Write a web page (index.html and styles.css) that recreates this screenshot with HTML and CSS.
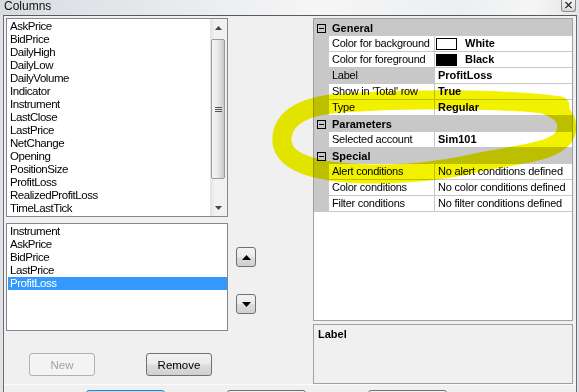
FILE: index.html
```html
<!DOCTYPE html>
<html>
<head>
<meta charset="utf-8">
<link rel="stylesheet" href="styles.css">
</head>
<body>
<div class="titlebar">
  <span class="title">Columns</span>
  <span class="close"><svg width="9" height="8" viewBox="0 0 9 8"><path d="M1.5 1 L7.5 7 M7.5 1 L1.5 7" stroke="#fff" stroke-width="3.2"/><path d="M1.5 1 L7.5 7 M7.5 1 L1.5 7" stroke="#333" stroke-width="1.6"/></svg></span>
</div>
<div class="frame">
  <div class="client">
    <div class="left">
      <div class="list list-all">
        <div class="items">
          <div class="item">AskPrice</div>
          <div class="item">BidPrice</div>
          <div class="item">DailyHigh</div>
          <div class="item">DailyLow</div>
          <div class="item">DailyVolume</div>
          <div class="item">Indicator</div>
          <div class="item">Instrument</div>
          <div class="item">LastClose</div>
          <div class="item">LastPrice</div>
          <div class="item">NetChange</div>
          <div class="item">Opening</div>
          <div class="item">PositionSize</div>
          <div class="item">ProfitLoss</div>
          <div class="item">RealizedProfitLoss</div>
          <div class="item">TimeLastTick</div>
        </div>
        <div class="vscroll">
          <div class="sbtn"><svg width="7" height="4" viewBox="0 0 7 4"><path d="M0 4 L3.5 0 L7 4 Z" fill="#444"/></svg></div>
          <div class="thumb"><div class="grip"><i></i><i></i><i></i></div></div>
          <div class="track"></div>
          <div class="sbtn"><svg width="7" height="4" viewBox="0 0 7 4"><path d="M0 0 L7 0 L3.5 4 Z" fill="#444"/></svg></div>
        </div>
      </div>
      <div class="list list-sel">
        <div class="item">Instrument</div>
        <div class="item">AskPrice</div>
        <div class="item">BidPrice</div>
        <div class="item">LastPrice</div>
        <div class="item selected">ProfitLoss</div>
      </div>
      <div class="btnrow">
        <div class="btn disabled">New</div>
        <div class="btn">Remove</div>
      </div>
    </div>
    <div class="middle">
      <div class="arrow"><svg width="9" height="5" viewBox="0 0 9 5"><path d="M0 5 L4.5 0 L9 5 Z" fill="#000"/></svg></div>
      <div class="arrow"><svg width="9" height="5" viewBox="0 0 9 5"><path d="M0 0 L9 0 L4.5 5 Z" fill="#000"/></svg></div>
    </div>
    <div class="right">
      <div class="pgrid">
        <div class="cat first"><span class="toggle"></span><span class="cat-label">General</span></div>
        <div class="row"><span class="gut"></span><span class="name">Color for background</span><span class="val"><span class="swatch"></span><b>White</b></span></div>
        <div class="row"><span class="gut"></span><span class="name">Color for foreground</span><span class="val"><span class="swatch black"></span><b>Black</b></span></div>
        <div class="row sel"><span class="gut"></span><span class="name">Label</span><span class="val"><b>ProfitLoss</b></span></div>
        <div class="row"><span class="gut"></span><span class="name">Show in 'Total' row</span><span class="val"><b>True</b></span></div>
        <div class="row"><span class="gut"></span><span class="name">Type</span><span class="val"><b>Regular</b></span></div>
        <div class="cat"><span class="toggle"></span><span class="cat-label">Parameters</span></div>
        <div class="row"><span class="gut"></span><span class="name">Selected account</span><span class="val"><b>Sim101</b></span></div>
        <div class="cat"><span class="toggle"></span><span class="cat-label">Special</span></div>
        <div class="row"><span class="gut"></span><span class="name">Alert conditions</span><span class="val">No alert conditions defined</span></div>
        <div class="row"><span class="gut"></span><span class="name">Color conditions</span><span class="val">No color conditions defined</span></div>
        <div class="row"><span class="gut"></span><span class="name">Filter conditions</span><span class="val">No filter conditions defined</span></div>
      </div>
      <div class="desc">Label</div>
    </div>
  </div>
  <div class="footer">
    <div class="fbtn default"></div>
    <div class="fbtn"></div>
    <div class="fbtn"></div>
  </div>
</div>
<svg class="mark" width="579" height="392" viewBox="0 0 579 392">
  <path d="M560 106 C520 100 430 97 340 103 C305 106 285 116 282 136 C280 156 298 166 330 171 C380 178 440 172 480 162 C520 154 552 152 563 138 C571 126 566 112 548 106" fill="none" stroke="#f2f200" stroke-width="19" stroke-linecap="round" stroke-linejoin="round"/>
</svg>
</body>
</html>
```

FILE: styles.css
```css
* { box-sizing: border-box; }
html, body { margin: 0; padding: 0; }
body {
  width: 579px;
  height: 392px;
  overflow: hidden;
  position: relative;
  background: #dfe3e8;
  font-family: "Liberation Sans", Arial, sans-serif;
  font-size: 11px;
  color: #000;
}
.titlebar {
  height: 15px;
  display: flex;
  align-items: flex-start;
  justify-content: space-between;
  padding: 0 3px 0 4px;
  background: linear-gradient(to right, #d8dce1 0%, #e8eaed 30%, #f6f6f6 55%, #eceef0 80%, #f6f6f6 92%, #e2e4e7 100%);
}
.title {
  font-size: 12px;
  line-height: 12px;
  margin-top: 0;
  color: #111;
}
.close {
  width: 15px;
  height: 13px;
  margin-top: -1px;
  border: 1px solid #8c8c8c;
  border-top: none;
  border-radius: 0 0 3px 3px;
  background: linear-gradient(#f4f4f4, #d6d6d6);
  display: flex;
  align-items: center;
  justify-content: center;
}
.frame {
  margin-left: 3px;
  width: 574px;
  border-left: 1px solid #6d6d6d;
  border-right: 1px solid #6d6d6d;
  border-top: 1px solid #5a5a5a;
  background: #f0f0f0;
}
.client {
  height: 368px;
  display: grid;
  grid-template-columns: 222px 85px 260px;
  padding: 2px 3px 0 2px;
}
.left { display: flex; flex-direction: column; }
.list {
  border: 1px solid #828790;
  background: #fff;
}
.list-all { height: 199px; display: flex; }
.items { flex: 1; padding-top: 1px; }
.item {
  height: 13px;
  line-height: 13px;
  margin-left: 1px;
  padding-left: 2px;
  white-space: nowrap;
  font-size: 11.5px;
  letter-spacing: -0.45px;
}
.item.selected { background: #3399ff; color: #fff; }
.vscroll {
  width: 17px;
  display: flex;
  flex-direction: column;
  background: linear-gradient(to right, #e3e3e3, #f2f2f2 30%, #f0f0f0);
}
.sbtn { height: 17px; display: flex; align-items: center; justify-content: center; }
.thumb {
  height: 140px;
  margin: 3px 2px 0 1px;
  border: 1px solid #9a9a9a;
  border-radius: 2px;
  background: linear-gradient(to right, #f6f6f6, #e9e9e9 45%, #d6d6d6 80%, #c6c6c6);
  display: flex;
  align-items: center;
  justify-content: center;
}
.grip { display: flex; flex-direction: column; gap: 1px; }
.grip i { display: block; width: 7px; height: 1px; background: #555; }
.track { flex: 1; }
.list-sel { height: 108px; margin-top: 6px; padding-top: 1px; }
.btnrow { display: flex; gap: 51px; margin-top: 22px; padding-left: 23px; }
.btn {
  width: 66px;
  height: 23px;
  border: 1px solid #707070;
  border-radius: 3px;
  background: linear-gradient(#f2f2f2 0%, #ebebeb 48%, #dddddd 52%, #cfcfcf 100%);
  display: flex;
  align-items: center;
  justify-content: center;
  font-size: 11.5px;
}
.btn.disabled {
  border-color: #adb2b5;
  background: #f4f4f4;
  color: #a0a0a0;
}
.middle {
  display: flex;
  flex-direction: column;
  align-items: flex-start;
  gap: 27px;
  padding: 229px 0 0 8px;
}
.arrow {
  width: 20px;
  height: 20px;
  border: 1px solid #707070;
  border-radius: 3px;
  background: linear-gradient(#f2f2f2 0%, #ebebeb 48%, #dddddd 52%, #cfcfcf 100%);
  display: flex;
  align-items: center;
  justify-content: center;
}
.right { display: flex; flex-direction: column; gap: 3px; }
.pgrid {
  height: 303px;
  border: 1px solid #a0a0a0;
  background: #fff;
}
.cat {
  height: 16px;
  background: #c8c8c8;
  display: flex;
  align-items: center;
}
.cat.first { height: 17px; padding-top: 1px; }
.toggle {
  width: 9px;
  height: 9px;
  margin-left: 3px;
  border: 1px solid #000;
  display: flex;
  align-items: center;
  justify-content: center;
}
.toggle::after { content: ""; width: 5px; height: 1px; background: #000; }
.cat-label { margin-left: 6px; font-weight: bold; line-height: 15px; }
.row {
  display: grid;
  grid-template-columns: 15px 106px 1fr;
  height: 16px;
  border-bottom: 1px solid #c8c8c8;
}
.gut { background: #c8c8c8; }
.name {
  border-right: 1px solid #c8c8c8;
  padding-left: 3px;
  line-height: 15px;
  white-space: nowrap;
  overflow: hidden;
  letter-spacing: -0.25px;
}
.row.sel .name { background: #c8c8c8; }
.val {
  padding-left: 3px;
  line-height: 15px;
  white-space: nowrap;
  overflow: hidden;
  display: flex;
  align-items: center;
  letter-spacing: -0.2px;
}
.val b { letter-spacing: 0; }
.swatch {
  width: 21px;
  height: 12px;
  margin-left: -2px;
  margin-right: 8px;
  border: 1px solid #000;
  background: #fff;
}
.swatch.black { background: #000; }
.desc {
  height: 60px;
  border: 1px solid #a0a0a0;
  background: #f0f0f0;
  padding: 3px 4px;
  font-weight: bold;
  line-height: 13px;
}
.footer {
  height: 8px;
  border-top: 1px solid #fcfcfc;
  display: flex;
  gap: 62px;
  padding: 5px 0 0 82px;
}
.fbtn {
  width: 79px;
  height: 20px;
  flex: none;
  border: 1px solid #707070;
  border-radius: 3px;
  background: linear-gradient(#f2f2f2, #ebebeb);
}
.fbtn.default { border-color: #3c7fb1; box-shadow: inset 0 0 0 1px #a6e0fa; }
.mark {
  position: absolute;
  left: 0;
  top: 0;
  pointer-events: none;
  mix-blend-mode: multiply;
}
```
